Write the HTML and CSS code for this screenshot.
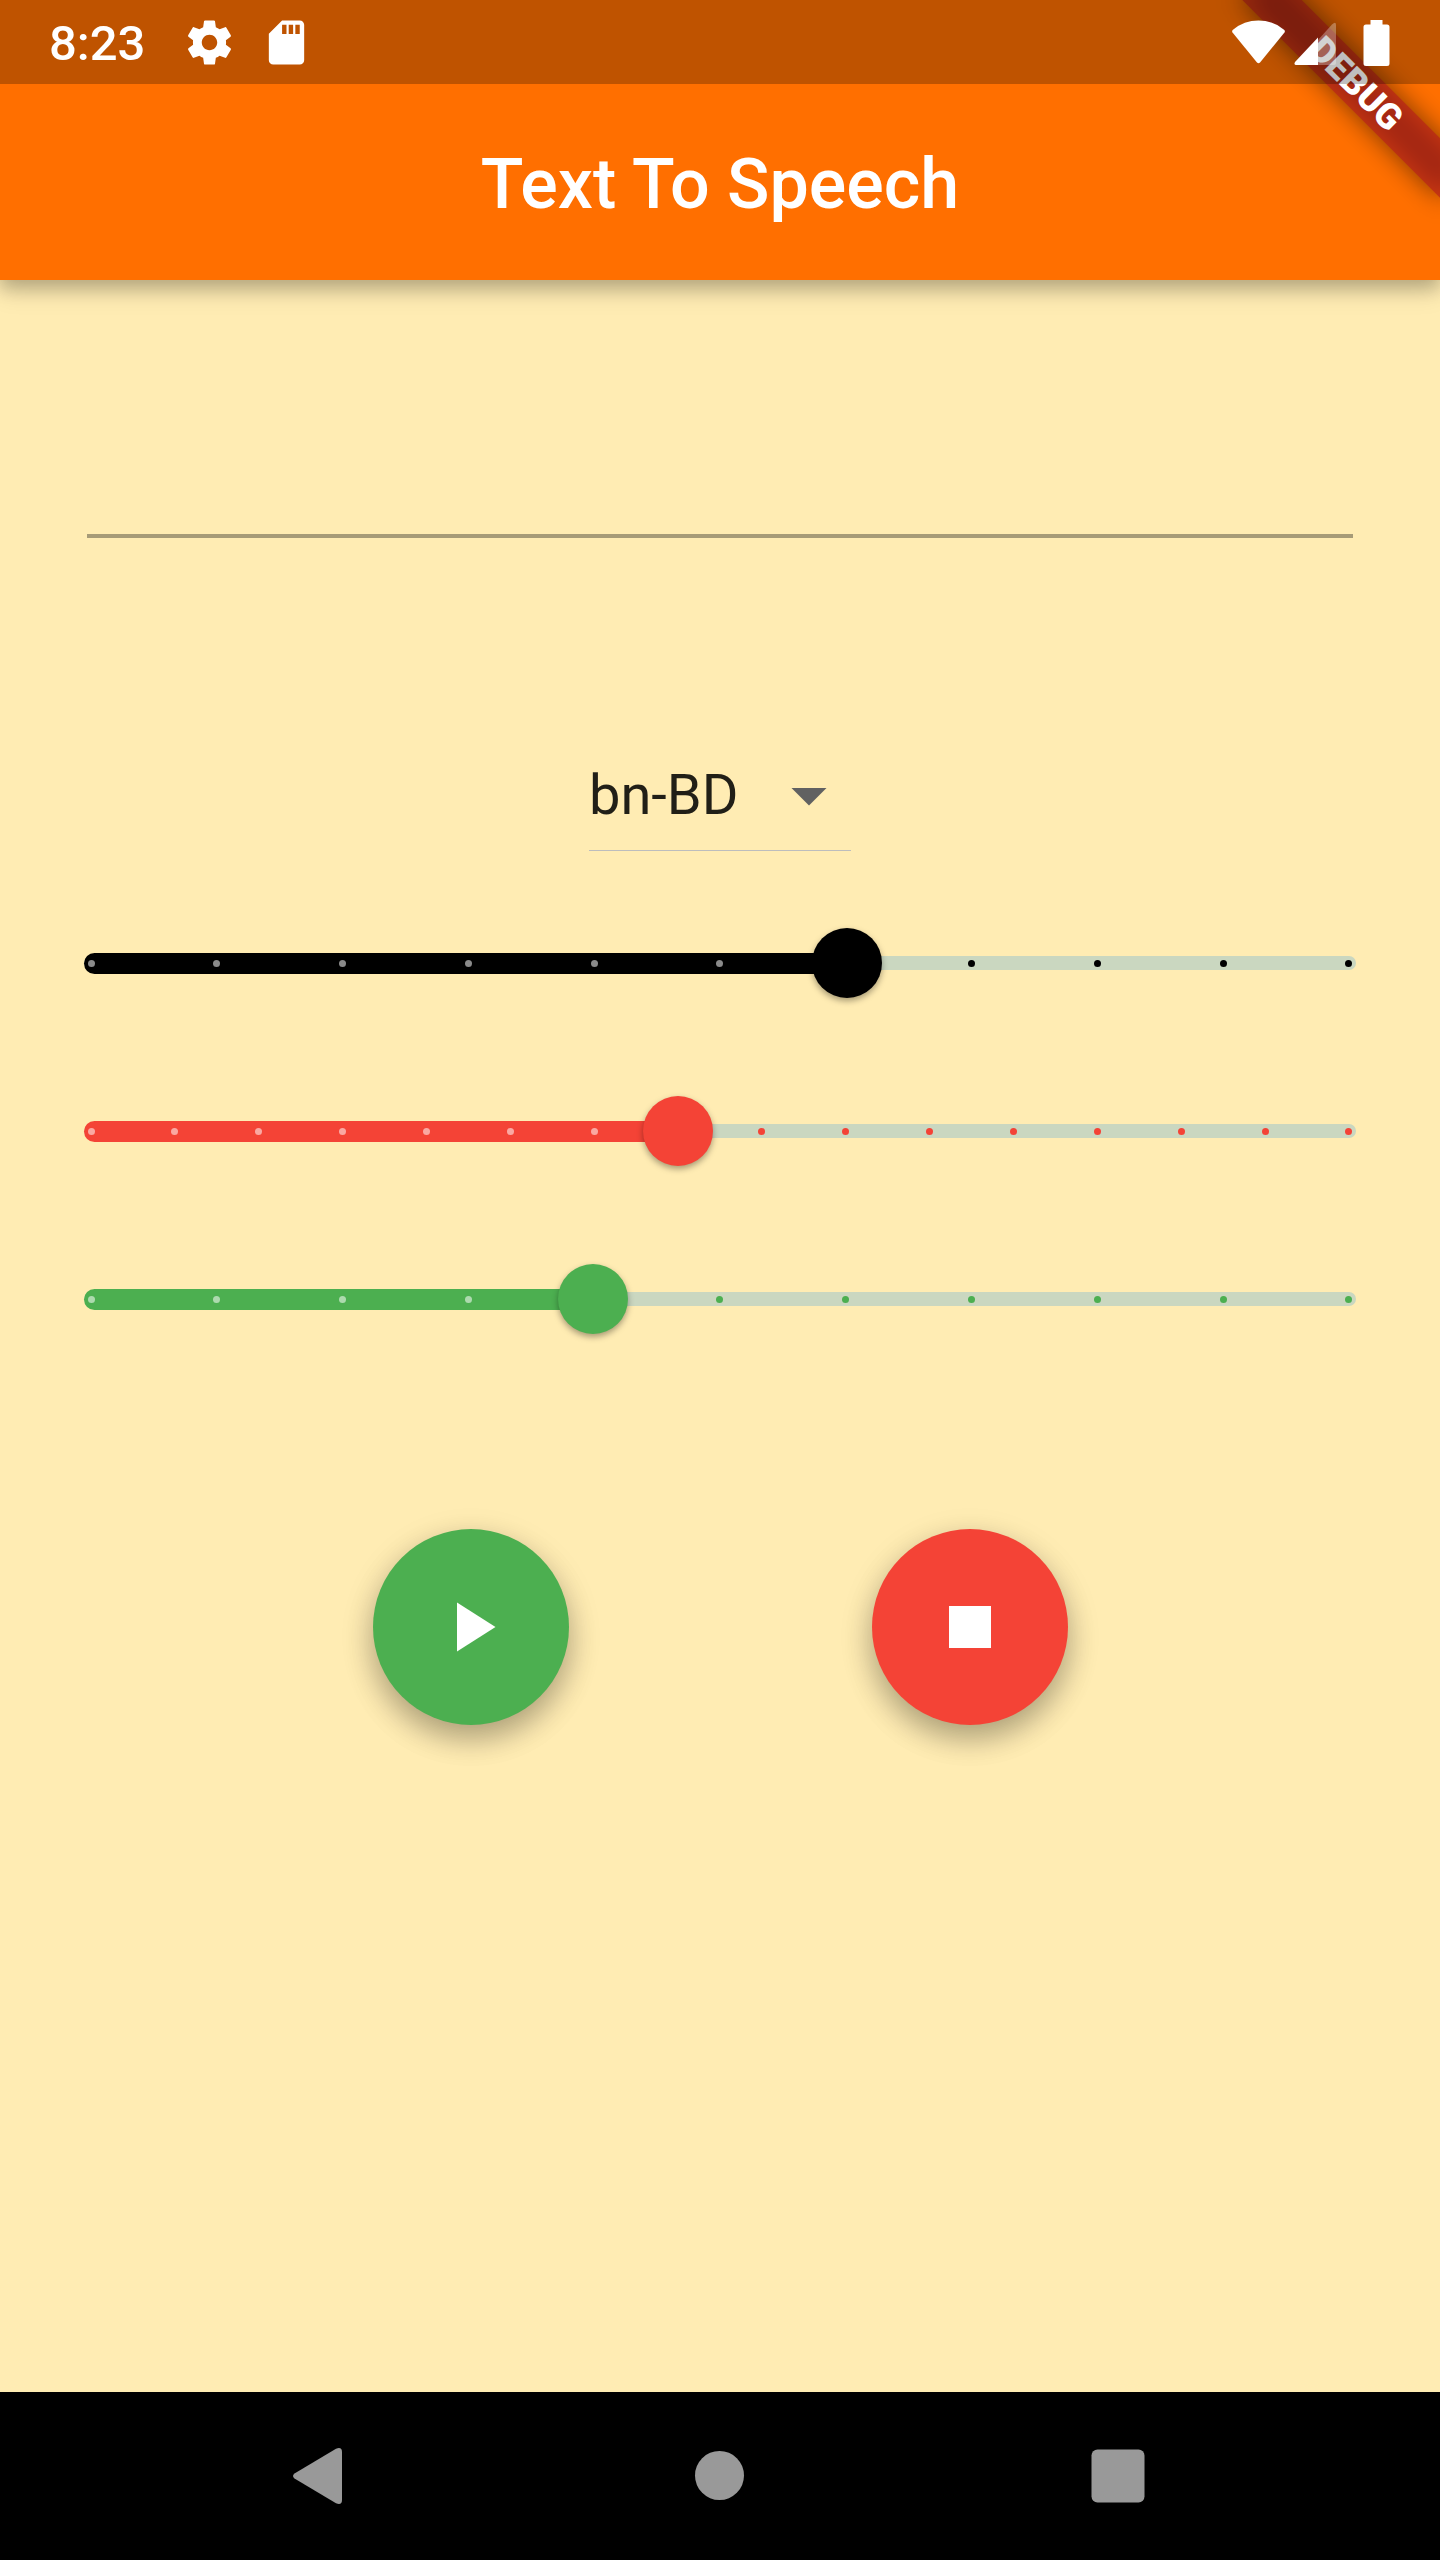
FILE: index.html
```html
<!DOCTYPE html>
<html lang="en">
<head>
<meta charset="utf-8">
<meta name="viewport" content="width=device-width, initial-scale=1">
<title>Text To Speech</title>
<link rel="stylesheet" href="styles.css">
</head>
<body>
<div class="debug-corner"><div class="debug-ribbon">DEBUG</div></div>

<div class="status-bar">
  <div class="status-group">
    <time class="clock">8:23</time>
    <svg class="status-icon" viewBox="0 0 24 24" aria-hidden="true"><path d="M19.43 12.98c.04-.32.07-.64.07-.98s-.03-.66-.07-.98l2.11-1.65c.19-.15.24-.42.12-.64l-2-3.46c-.12-.22-.39-.3-.61-.22l-2.49 1c-.52-.4-1.08-.73-1.69-.98l-.38-2.65C14.46 2.18 14.25 2 14 2h-4c-.25 0-.46.18-.49.42l-.38 2.65c-.61.25-1.17.59-1.69.98l-2.49-1c-.23-.09-.49 0-.61.22l-2 3.46c-.13.22-.07.49.12.64l2.11 1.65c-.04.32-.07.65-.07.98s.03.66.07.98l-2.11 1.65c-.19.15-.24.42-.12.64l2 3.46c.12.22.39.3.61.22l2.49-1c.52.4 1.08.73 1.69.98l.38 2.65c.03.24.24.42.49.42h4c.25 0 .46-.18.49-.42l.38-2.65c.61-.25 1.17-.59 1.69-.98l2.49 1c.23.09.49 0 .61-.22l2-3.46c.12-.22.07-.49-.12-.64l-2.11-1.65zM12 15.5c-1.93 0-3.5-1.57-3.5-3.5s1.57-3.5 3.5-3.5 3.5 1.57 3.5 3.5-1.57 3.5-3.5 3.5z"/></svg>
    <svg class="status-icon" viewBox="0 0 24 24" aria-hidden="true"><path d="M18 2h-8L4 8v12c0 1.100.9 2 2 2h12c1.100 0 2-.9 2-2V4c0-1.100-.9-2-2-2zm-6 6.200h-2V4h2v4.200zm3 0h-2V4h2v4.200zm3 0h-2V4h2v4.200z"/></svg>
  </div>
  <div class="status-group status-group-end">
    <svg class="status-icon" viewBox="0 0 53 53" aria-hidden="true"><path d="M0.500 16.500Q-.5 15 1 13.700Q12 4.500 26.500 4.500T52 13.700Q53.500 15 52.500 16.500L28 46.500Q26.500 48 25 46.500Z"/></svg>
    <svg class="status-icon" viewBox="0 0 53 53" aria-hidden="true"><path opacity=".3" d="M26.500 24.500L41 8.500Q45 5 45 9V47Q45 49 43 49H26.500Z"/><path d="M27 21.500V49H5Q2.500 48.500 4 46Z"/></svg>
    <svg class="status-icon" viewBox="0 0 53 53" aria-hidden="true"><path d="M20.500 4h12v4.500h4.500q2.500 0 2.500 2.500v36.500q0 2.500-2.500 2.500h-21q-2.500 0-2.500-2.500v-36.500q0-2.500 2.500-2.500h4.500z"/></svg>
  </div>
</div>

<header class="app-bar"><h1 class="app-title">Text To Speech</h1></header>

<main class="content">
  <input class="text-field" type="text" aria-label="Text to speak">

  <div class="language">
    <select class="language-select" aria-label="Language"><option>bn-BD</option></select>
    <svg class="language-arrow" viewBox="0 0 24 24" aria-hidden="true"><path d="M7 10l5 5 5-5z"/></svg>
  </div>

  <div class="sliders">
    <div class="slider slider-volume">
      <div class="track"></div>
      <div class="fill-lane"><div class="fill" style="width:60%"></div></div>
      <div class="ticks"><i class="on"></i><i class="on"></i><i class="on"></i><i class="on"></i><i class="on"></i><i class="on"></i><i></i><i></i><i></i><i></i><i></i></div>
      <input class="range" type="range" min="0" max="10" value="6" aria-label="Volume">
    </div>
    <div class="slider slider-pitch">
      <div class="track"></div>
      <div class="fill-lane"><div class="fill" style="width:46.67%"></div></div>
      <div class="ticks"><i class="on"></i><i class="on"></i><i class="on"></i><i class="on"></i><i class="on"></i><i class="on"></i><i class="on"></i><i></i><i></i><i></i><i></i><i></i><i></i><i></i><i></i><i></i></div>
      <input class="range" type="range" min="0" max="15" value="7" aria-label="Pitch">
    </div>
    <div class="slider slider-rate">
      <div class="track"></div>
      <div class="fill-lane"><div class="fill" style="width:40%"></div></div>
      <div class="ticks"><i class="on"></i><i class="on"></i><i class="on"></i><i class="on"></i><i></i><i></i><i></i><i></i><i></i><i></i><i></i></div>
      <input class="range" type="range" min="0" max="10" value="4" aria-label="Rate">
    </div>
  </div>

  <div class="actions">
    <button class="fab fab-play" type="button" aria-label="Play"><svg class="fab-icon" viewBox="0 0 24 24" aria-hidden="true"><path d="M8 5v14l11-7z"/></svg></button>
    <button class="fab fab-stop" type="button" aria-label="Stop"><svg class="fab-icon" viewBox="0 0 24 24" aria-hidden="true"><path d="M6 6h12v12H6z"/></svg></button>
  </div>
</main>

<nav class="nav-bar" aria-label="System">
  <button class="nav-button" type="button" aria-label="Back"><svg viewBox="0 0 84 84" aria-hidden="true"><path d="M15.500 39.500L57 14.700Q63 12.500 63 18V66Q63 71.500 57 69.300L15.500 44.500Q12.500 42 15.500 39.500Z"/></svg></button>
  <button class="nav-button" type="button" aria-label="Home"><svg viewBox="0 0 84 84" aria-hidden="true"><circle cx="41.500" cy="41.500" r="24.500"/></svg></button>
  <button class="nav-button" type="button" aria-label="Recent apps"><svg viewBox="0 0 84 84" aria-hidden="true"><rect x="14.500" y="15.500" width="53" height="53" rx="6"/></svg></button>
</nav>
</body>
</html>
```
FILE: styles.css
```css
* {
  box-sizing: border-box;
}

body {
  position: relative;
  display: flex;
  flex-direction: column;
  min-height: 100vh;
  margin: 0;
  background: #ffecb3;
  font-family: Roboto, "Liberation Sans", sans-serif;
}

button {
  padding: 0;
  border: 0;
}

/* Status bar: a dark scrim over the top of the app bar */
.status-bar {
  position: absolute;
  inset: 0 0 auto;
  z-index: 3;
  display: flex;
  align-items: center;
  justify-content: space-between;
  height: 84px;
  padding: 0 37px 0 49px;
  background: rgba(0, 0, 0, .25);
  color: #fff;
}

.status-group {
  display: flex;
  align-items: center;
  gap: 24px;
}

.status-group-end {
  gap: 6px;
}

.clock {
  margin-right: 14px;
  padding-top: 4px;
  font-size: 49px;
  font-weight: 500;
  line-height: 80px;
}

.status-icon {
  width: 53px;
  height: 53px;
  fill: #fff;
}

/* Debug ribbon across the top right corner */
.debug-corner {
  position: absolute;
  top: 0;
  right: 0;
  z-index: 2;
  width: 280px;
  height: 280px;
  overflow: hidden;
  pointer-events: none;
}

.debug-ribbon {
  position: absolute;
  top: 63px;
  left: 56px;
  width: 280px;
  color: #fff;
  font-size: 36px;
  font-weight: 900;
  line-height: 42px;
  text-align: center;
  transform: rotate(45deg);
}

.debug-ribbon::before,
.debug-ribbon::after {
  content: "";
  position: absolute;
  inset: 0;
  z-index: -1;
}

.debug-ribbon::before {
  background: rgba(0, 0, 0, .5);
  filter: blur(13px);
}

.debug-ribbon::after {
  background: rgba(183, 28, 28, .63);
}

.app-bar {
  position: relative;
  z-index: 1;
  padding-top: 88px;
  background: #ff6f00;
  box-shadow: 0 8px 16px rgba(0, 0, 0, .2), 0 12px 24px rgba(0, 0, 0, .12);
}

.app-title {
  margin: 0;
  color: #fff;
  font-size: 70px;
  font-weight: 500;
  line-height: 192px;
  text-align: center;
}

.content {
  flex: 1;
  display: flex;
  flex-direction: column;
  padding: 87px 49px;
}

.text-field {
  height: 171px;
  margin: 0 38px;
  padding: 0;
  border: 0;
  border-bottom: 4px solid #a79b77;
  border-radius: 0;
  outline: 0;
  background: transparent;
  font: 56px/64px Roboto, sans-serif;
}

.language {
  display: grid;
  align-self: center;
  align-items: center;
  width: 262px;
  margin: 201px 0 28px;
}

.language-select,
.language-arrow {
  grid-area: 1 / 1;
}

.language-select {
  appearance: none;
  width: 100%;
  height: 112px;
  padding: 0;
  border: 0;
  border-bottom: 1px solid #bdbdbd;
  border-radius: 0;
  background: transparent;
  color: rgba(0, 0, 0, .87);
  font: 56px/64px Roboto, sans-serif;
}

.language-arrow {
  justify-self: end;
  width: 84px;
  height: 84px;
  fill: #616161;
  pointer-events: none;
}

/* Sliders: track, fill, ticks and the range input share one grid cell */
.slider {
  display: grid;
  align-items: center;
  height: 168px;
}

.slider > * {
  grid-area: 1 / 1;
}

.slider-volume {
  color: #000;
}

.slider-pitch {
  color: #f44336;
}

.slider-rate {
  color: #4caf50;
}

.track,
.fill-lane,
.ticks {
  margin: 0 35px;
}

.track {
  height: 14px;
  border-radius: 7px;
  background: #cad7c0;
}

.fill {
  height: 21px;
  border-radius: 11px 0 0 11px;
  background: currentColor;
}

.ticks {
  display: flex;
  justify-content: space-between;
}

.ticks i {
  display: grid;
  place-items: center;
  width: 14px;
  height: 14px;
}

.ticks i::before {
  content: "";
  width: 7px;
  height: 7px;
  border-radius: 50%;
  background: currentColor;
}

.ticks .on::before {
  background: rgba(255, 255, 255, .54);
}

.range {
  appearance: none;
  width: 100%;
  height: 70px;
  margin: 0;
  background: transparent;
  color: inherit;
}

.range::-webkit-slider-thumb {
  appearance: none;
  width: 70px;
  height: 70px;
  border-radius: 50%;
  background: currentColor;
  box-shadow: 0 3px 6px rgba(0, 0, 0, .35);
}

.actions {
  display: flex;
  justify-content: center;
  gap: 303px;
  margin-top: 146px;
}

.fab {
  display: grid;
  place-items: center;
  width: 196px;
  height: 196px;
  border-radius: 50%;
  box-shadow: 0 14px 28px rgba(0, 0, 0, .24), 0 10px 36px rgba(0, 0, 0, .12);
}

.fab-play {
  background: #4caf50;
}

.fab-stop {
  background: #f44336;
}

.fab-icon {
  width: 84px;
  height: 84px;
  fill: #fff;
}

.nav-bar {
  display: flex;
  align-items: center;
  justify-content: center;
  gap: 315px;
  height: 168px;
  background: #000;
}

.nav-button {
  width: 84px;
  height: 84px;
  background: transparent;
  fill: #999;
}
```
